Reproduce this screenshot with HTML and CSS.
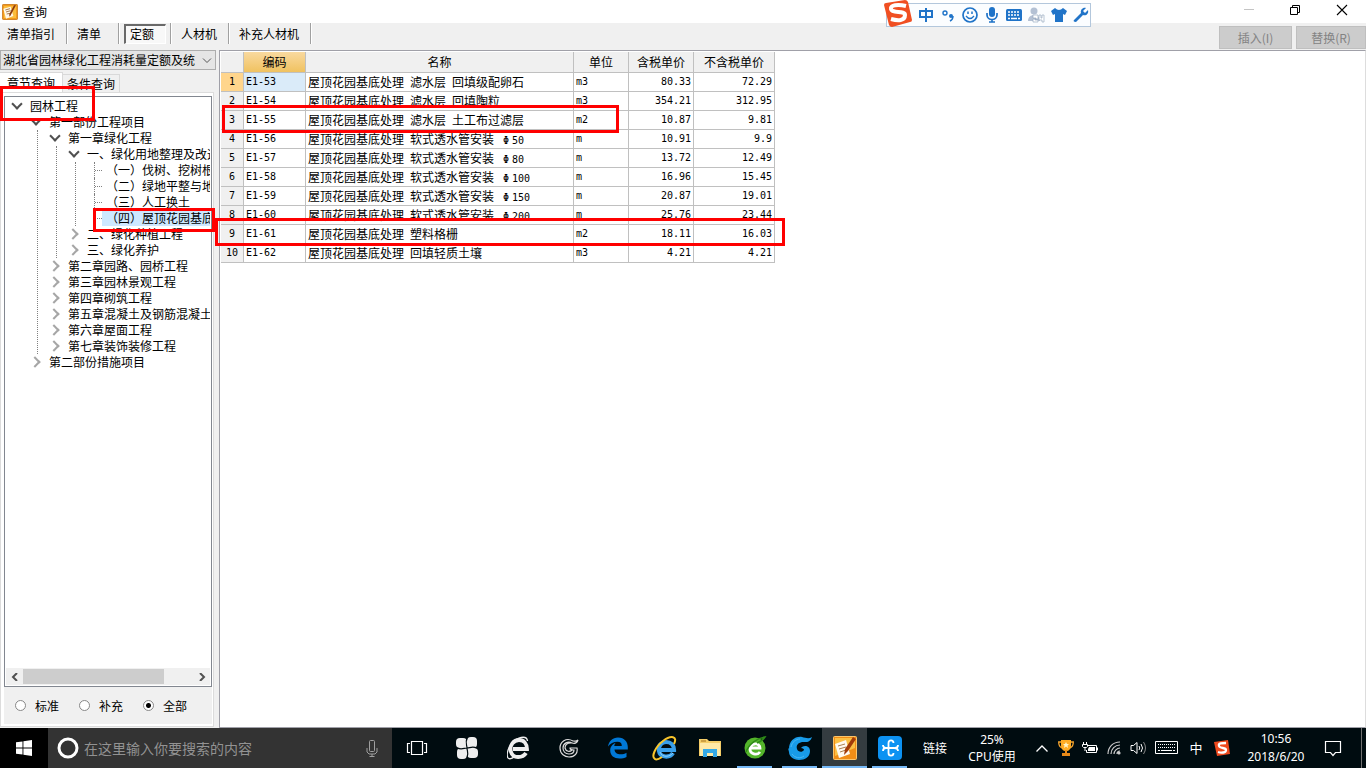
FILE: index.html
```html
<!DOCTYPE html>
<html lang="zh-CN">
<head>
<meta charset="utf-8">
<title>查询</title>
<link rel="stylesheet" href="styles.css">
</head>
<body>
<div class="desktop">
  <header class="titlebar">
    <svg class="app-icon" width="16" height="16" viewBox="0 0 24 24"><rect x=".5" y=".5" width="23" height="23" rx="2" fill="#f39a1c" stroke="#b8640a"/><path d="M3 3h18v18H3z" fill="#fbbd3e"/><path d="M2 7l11-3 4 14-11 4z" fill="#fff8e8"/><path d="M5 9l7-2M6 12l7-2M7 15l5-1" stroke="#9a6a3a" stroke-width="1.3"/><path d="M21 2l-8 15-2 2 0-4 7-13z" fill="#8b3a10"/></svg>
    <h1 class="title">查询</h1>
    <div class="window-controls">
      <button class="win-btn" aria-label="最小化"><svg width="12" height="12"><path d="M1 5.5h10" stroke="#c4c4c4"/></svg></button>
      <button class="win-btn" aria-label="还原"><svg width="12" height="12" fill="none" stroke="#000"><path d="M1.500 3.500h7v7h-7zM3.500 3.500v-2h7v7h-2"/></svg></button>
      <button class="win-btn" aria-label="关闭"><svg width="12" height="12"><path d="M1 1l10 10M11 1L1 11" stroke="#000" stroke-width="1.100"/></svg></button>
    </div>
  </header>

  <nav class="toolbar">
    <button class="tool wide-first">清单指引</button>
    <button class="tool">清单</button>
    <button class="tool pressed"><span>定额</span></button>
    <button class="tool medium">人材机</button>
    <button class="tool wide">补充人材机</button>
    <div class="actions">
      <button class="action" disabled>插入(I)</button>
      <button class="action" disabled>替换(R)</button>
    </div>
  </nav>

  <main class="workspace">
    <aside class="sidebar">
      <div class="combo">
        <select aria-label="定额库"><option>湖北省园林绿化工程消耗量定额及统</option></select>
        <svg width="10" height="6" fill="none" stroke="#555"><path d="M1 .5l4 4 4-4"/></svg>
      </div>
      <div class="tabs">
        <button class="tab active">章节查询</button>
        <button class="tab">条件查询</button>
      </div>
      <div class="pane">
        <div class="tree-box">
          <ul class="tree">
            <li><div class="node open">园林工程</div>
              <ul class="plain">
                <li><div class="node open">第一部份工程项目</div>
                  <ul>
                    <li><div class="node open">第一章绿化工程</div>
                      <ul>
                        <li><div class="node open">一、绿化用地整理及改造</div>
                          <ul class="leaves">
                            <li><div class="leaf"><span>（一）伐树、挖树根</span></div></li>
                            <li><div class="leaf"><span>（二）绿地平整与地</span></div></li>
                            <li><div class="leaf"><span>（三）人工换土</span></div></li>
                            <li><div class="leaf selected"><span>（四）屋顶花园基底</span></div></li>
                          </ul>
                        </li>
                        <li><div class="node">二、绿化种植工程</div></li>
                        <li><div class="node">三、绿化养护</div></li>
                      </ul>
                    </li>
                    <li><div class="node">第二章园路、园桥工程</div></li>
                    <li><div class="node">第三章园林景观工程</div></li>
                    <li><div class="node">第四章砌筑工程</div></li>
                    <li><div class="node">第五章混凝土及钢筋混凝土</div></li>
                    <li><div class="node">第六章屋面工程</div></li>
                    <li><div class="node">第七章装饰装修工程</div></li>
                  </ul>
                </li>
                <li><div class="node">第二部份措施项目</div></li>
              </ul>
            </li>
          </ul>
          <div class="scrollbar">
            <button class="scroll-btn" aria-label="向左"><svg width="8" height="8"><path d="M6 0L2 4l4 4" fill="none" stroke="#505050" stroke-width="2"/></svg></button>
            <div class="track"><div class="thumb"></div></div>
            <button class="scroll-btn" aria-label="向右"><svg width="8" height="8"><path d="M2 0l4 4-4 4" fill="none" stroke="#505050" stroke-width="2"/></svg></button>
          </div>
        </div>
        <div class="filters">
          <label><input type="radio" name="scope">标准</label>
          <label><input type="radio" name="scope">补充</label>
          <label><input type="radio" name="scope" checked>全部</label>
        </div>
      </div>
    </aside>

    <section class="content">
      <table class="grid">
        <colgroup><col class="c-no"><col class="c-code"><col class="c-name"><col class="c-unit"><col class="c-tax"><col class="c-net"></colgroup>
        <thead><tr><th></th><th class="sorted">编码</th><th>名称</th><th>单位</th><th>含税单价</th><th>不含税单价</th></tr></thead>
        <tbody>
          <tr class="current"><th>1</th><td class="mono">E1-53</td><td><span>屋顶花园基底处理</span><span>滤水层</span><span>回填级配卵石</span></td><td class="mono">m3</td><td class="num">80.33</td><td class="num">72.29</td></tr>
          <tr><th>2</th><td class="mono">E1-54</td><td><span>屋顶花园基底处理</span><span>滤水层</span><span>回填陶粒</span></td><td class="mono">m3</td><td class="num">354.21</td><td class="num">312.95</td></tr>
          <tr><th>3</th><td class="mono">E1-55</td><td><span>屋顶花园基底处理</span><span>滤水层</span><span>土工布过滤层</span></td><td class="mono">m2</td><td class="num">10.87</td><td class="num">9.81</td></tr>
          <tr><th>4</th><td class="mono">E1-56</td><td><span>屋顶花园基底处理</span><span>软式透水管安装</span><span class="dia"><b>Φ</b>50</span></td><td class="mono">m</td><td class="num">10.91</td><td class="num">9.9</td></tr>
          <tr><th>5</th><td class="mono">E1-57</td><td><span>屋顶花园基底处理</span><span>软式透水管安装</span><span class="dia"><b>Φ</b>80</span></td><td class="mono">m</td><td class="num">13.72</td><td class="num">12.49</td></tr>
          <tr><th>6</th><td class="mono">E1-58</td><td><span>屋顶花园基底处理</span><span>软式透水管安装</span><span class="dia"><b>Φ</b>100</span></td><td class="mono">m</td><td class="num">16.96</td><td class="num">15.45</td></tr>
          <tr><th>7</th><td class="mono">E1-59</td><td><span>屋顶花园基底处理</span><span>软式透水管安装</span><span class="dia"><b>Φ</b>150</span></td><td class="mono">m</td><td class="num">20.87</td><td class="num">19.01</td></tr>
          <tr><th>8</th><td class="mono">E1-60</td><td><span>屋顶花园基底处理</span><span>软式透水管安装</span><span class="dia"><b>Φ</b>200</span></td><td class="mono">m</td><td class="num">25.76</td><td class="num">23.44</td></tr>
          <tr><th>9</th><td class="mono">E1-61</td><td><span>屋顶花园基底处理</span><span>塑料格栅</span></td><td class="mono">m2</td><td class="num">18.11</td><td class="num">16.03</td></tr>
          <tr><th>10</th><td class="mono">E1-62</td><td><span>屋顶花园基底处理</span><span>回填轻质土壤</span></td><td class="mono">m3</td><td class="num">4.21</td><td class="num">4.21</td></tr>
        </tbody>
      </table>
    </section>
  </main>

  <footer class="taskbar">
    <button class="start" aria-label="开始"><svg width="16" height="16" fill="#fff"><path d="M0 2.300L6.500 1.400v6.100H0zM7.400 1.200L16 0v7.500H7.400zM0 8.400h6.500v6.200L0 13.700zM7.400 8.400H16V16l-8.600-1.200z"/></svg></button>
    <div class="search">
      <svg width="22" height="22"><circle cx="11" cy="11" r="9" fill="none" stroke="#fff" stroke-width="3"/></svg>
      <input type="text" aria-label="搜索" placeholder="在这里输入你要搜索的内容">
      <svg width="12" height="17" fill="none" stroke="#a0a0a0"><rect x="3.500" y=".5" width="5" height="11" rx="1"/><path d="M1 8v4l2 2h6l2-2V8M6 14v2.500M3.500 16.500h5"/></svg>
    </div>
    <button class="task" aria-label="任务视图"><svg width="22" height="16" fill="none" stroke="#fff" stroke-width="1.200"><path d="M5.500 1.500h11v13h-11zM4 3.500H1.500v9H4M18 3.500h2.500v9H18"/></svg></button>
    <button class="task far" aria-label="四叶草"><svg width="22" height="22"><g fill="#eee"><rect x="0" y="1" width="11" height="10" rx="4"/><rect x="11" y="0" width="10" height="11" rx="4"/><rect x="11" y="11" width="11" height="10" rx="4"/><rect x="1" y="11" width="10" height="11" rx="4"/><path d="M7 7h8v8H7z"/></g><path d="M11 11C11 8 9 6 11 1M11 11c3 0 5-2 10 0M11 11c0 3 2 5 0 10M11 11c-3 0-5 2-10 0" fill="none" stroke="#000c10" stroke-width="1.200"/></svg></button>
    <button class="task far" aria-label="浏览器"><svg width="22" height="24" fill="none"><path d="M19 17c-3 5-13 6-15-1C2 9 7 4 12 4c5 0 8 4 8 9H6" stroke="#eee" stroke-width="3.800"/><path d="M20.500 5C20 0 14 0 7 5 1 10-1 19 1 22c1 1.500 5 0 8-2" stroke="#eee" stroke-width="1.300"/></svg></button>
    <button class="task far" aria-label="下载工具"><svg width="20" height="20" fill="none" stroke="#ddd" stroke-width="1.200"><path d="M19 2c-2 2-3 1-5 1C7-1 1 4 1 10c0 6 5 9 9 9 6 0 9-4 8-9h-7c0 1 1 2 4 2 0 3-2 4-5 4-4 0-6-3-6-6 0-5 5-7 9-5 3 1 5 0 6-3zM14 5C7 4 6 8 6 10c1 4 5 4 7 2"/></svg></button>
    <button class="task edge" aria-label="Edge"><svg width="20" height="22" viewBox="0 0 20 22" fill="#0078d7"><path d="M0 9.500C1 4 4.500.5 10 .5c6.500 0 9.800 4.500 9.800 9.500v2.500H6.500c.2 3.500 3 4.800 6 4.800 2.500 0 4.300-.6 6-1.600V20c-2 1-4.500 1.500-7 1.500-5.500 0-9.300-3-9.300-8 0-4 2.300-6.500 5.500-7.800C6.500 7 6.300 8.500 6.300 9h7.500c0-3-1.300-4.300-4.300-4.300C5.500 4.700 2.200 6.500 0 9.500z"/></svg></button>
    <button class="task" aria-label="Internet Explorer"><svg width="26" height="26" fill="none"><path d="M21 18c-3 5-13 5-14-2-1-6 3-9 7-9 5 0 8 3 8 8H8" stroke="#3aa0ea" stroke-width="4.200"/><path d="M21 18c-3 4-11 5-13-1" stroke="#8fd3fa" stroke-width="1"/><path d="M22 9c4-8-3-9-11-3C3 12-1 22 3 24c1 .8 4 0 7-2" stroke="#f8c52b" stroke-width="2"/></svg></button>
    <button class="task" aria-label="文件资源管理器"><svg width="22" height="20"><path d="M0 1h8l2 2h12v15H0z" fill="#f4cd68"/><path d="M1 5h20v13H1z" fill="#ffe9a6"/><path d="M4 19v-8h14v8h-4v-4H8v4z" fill="#35a9e6"/><path d="M2 3h5" stroke="#a6731c"/></svg></button>
    <button class="task running" aria-label="绿色浏览器"><svg width="24" height="24" fill="none"><circle cx="12" cy="12" r="10.500" fill="#54b52b"/><path d="M17 16c-3 4-10 2-10-3 0-6 10-7 10-1H8" stroke="#fff" stroke-width="2.800"/><path d="M3 16C6 8 14 2 22 1c-2 3-5 5-8 6" stroke="#2e8a18" stroke-width="1.500"/></svg></button>
    <button class="task running" aria-label="广联达"><svg width="24" height="24"><path d="M24 1c-2 6-6 5-10 5-4 1-6 3-5 7 1 3 5 4 7 1 0-1-1-2-3-2 2-3 9-3 9 3 0 6-5 9-11 9C5 24 1 20 1 16l-1-4 1 1C1 5 7 0 14 1c4 1 7 2 10 0z" fill="#189be8"/><path d="M3 11C4 6 8 3 12 3M4 18c3 4 8 5 12 2" fill="none" stroke="#4ab8f4" stroke-width="1"/></svg></button>
    <button class="task running current" aria-label="计价软件"><svg width="24" height="24"><rect x=".5" y=".5" width="23" height="23" rx="1" fill="#f08d16" stroke="#fbc56b"/><path d="M2 2h20v10L2 20z" fill="#fbc044"/><path d="M2 8l11-4 4 14-11 4z" fill="#fffaf0"/><path d="M5 10l7-2M6 13l7-2M7 16l6-2" stroke="#ab8052"/><path d="M20 1l3 2-8 12-4 4 1-6z" fill="#a33c09"/></svg></button>
    <button class="task running" aria-label="云助手"><svg width="24" height="24" fill="none"><rect width="24" height="24" rx="4" fill="#0c92f2"/><path d="M15.500 7c0-3.500-5-3.500-5 0v10c0 3.500 5 3.500 5 0M5 9c0 2.500 1.500 3 4 3h7c2.500 0 4 .5 4 3M5 15c0-2 1.500-3 3-3M20 9c0 2-1.500 3-3 3" stroke="#fff" stroke-width="1.800"/></svg></button>
    <div class="tray">
      <span class="links">链接</span>
      <div class="cpu"><span>25%</span><span>CPU使用</span></div>
      <button class="tray-btn" aria-label="显示隐藏的图标"><svg width="12" height="7"><path d="M.5 6.500L6 1l5.500 5.500" fill="none" stroke="#fff" stroke-width="1.300"/></svg></button>
      <button class="tray-btn" aria-label="奖杯"><svg width="16" height="16"><path d="M3 0h10v5c0 4-2 6-5 6S3 9 3 5z" fill="#ffac25"/><path d="M3 2H.7c0 4 1 5 3.300 6M13 2h2.300c0 4-1 5-3.300 6" fill="none" stroke="#f6a52e" stroke-width="1.300"/><path d="M7 10h2v3h3v3H4v-3h3z" fill="#e88918"/><path d="M8 2l1 2h2L9.500 5.500 10 8 8 6.500 6 8l.5-2.500L5 4h2z" fill="#fff4c5"/></svg></button>
      <button class="tray-btn" aria-label="电源"><svg width="16" height="12" fill="none" stroke="#fff"><path d="M6 3.500h8.500v7h-10V8M15.500 5.500v3M1.500 0v3M4.500 0v3M.5 2.500h5v2l-1 1h-3l-1-1zM3 6v3"/><path d="M7 5h6v4H6V7z" fill="#fff" stroke="none"/></svg></button>
      <button class="tray-btn" aria-label="网络"><svg width="14" height="14" fill="none" stroke="#ccc" stroke-width="1.200"><path d="M1 13C1 6 6 1 13 1M4 13c0-5 4-9 9-9M7 13c0-3 3-6 6-6M10 13c0-2 1-3 3-3"/><circle cx="12" cy="12" r="1" fill="#fff"/></svg></button>
      <button class="tray-btn" aria-label="音量"><svg width="17" height="14" fill="none" stroke="#fff"><path d="M1 4.500h2.500L7 1.500v11L3.500 9.500H1z"/><path d="M9 5q1.500 2 0 4M11 3q3 4 0 8"/><path d="M13.500 1q4 6 0 12" stroke="#888"/></svg></button>
      <button class="tray-btn keyboard" aria-label="触摸键盘"><svg width="23" height="14" fill="none" stroke="#fff"><path d="M.5.500h22v12H.5z"/><path d="M3 3.500h17M3 6.500h17" stroke-dasharray="1 1"/><path d="M3 9.500h2M6 9.500h11M18 9.500h2"/></svg></button>
      <button class="tray-btn ime">中</button>
      <button class="tray-btn" aria-label="搜狗输入法"><svg width="16" height="16"><path d="M0 2l14-2 2 14-13 2z" fill="#ee4a1e"/><path d="M12 3c-4 0-8 0-7 3s7 1 7 4-5 3-8 2" fill="none" stroke="#fff" stroke-width="2.300"/></svg></button>
      <div class="clock"><span>10:56</span><span>2018/6/20</span></div>
      <button class="notify" aria-label="通知"><svg width="18" height="17"><path d="M1.500 1.500h15v11h-5L9 15.500 6.500 12.500h-5z" fill="none" stroke="#fff" stroke-width="1.200"/></svg></button>
      <button class="peek" aria-label="显示桌面"></button>
    </div>
  </footer>

  <div class="ime-bar">
    <svg class="ime-logo" width="29" height="28"><path d="M0 5Q0 3 2 3L21 0q2 0 3 2l4 18q0 2-2 2L8 27q-2 0-3-2z" fill="#f04f22"/><path d="M22 6C14 4 6 5 7 9c1 5 14 1 14 6 0 6-7 6-14 4" fill="none" stroke="#fff" stroke-width="4"/></svg>
    <svg width="16" height="16" fill="none" stroke="#1f73c8" stroke-width="2"><path d="M2 4h12v6H2zM8 1v14"/></svg>
    <svg width="16" height="16"><circle cx="5" cy="6" r="2" fill="none" stroke="#1f73c8" stroke-width="1.400"/><circle cx="11" cy="9" r="2" fill="#1f73c8"/><path d="M13 9c0 3-1 4-3 5" fill="none" stroke="#1f73c8" stroke-width="1.500"/></svg>
    <svg width="16" height="16" fill="none" stroke="#1f73c8"><circle cx="8" cy="8" r="7" stroke-width="1.700"/><path d="M6 4.500v2.500M10 4.500v2.500" stroke-width="1.500"/><path d="M4 9q4 5 8 0" stroke-width="1.300"/></svg>
    <svg width="16" height="16"><rect x="5" y="0" width="6" height="10" rx="3" fill="#1f73c8"/><path d="M3 6v2c0 6 10 6 10 0V6M8 12v3M5 15h6" fill="none" stroke="#1f73c8" stroke-width="1.700"/></svg>
    <svg width="16" height="14"><rect y="1" width="16" height="12" rx="1.500" fill="#1f73c8"/><path d="M2 4h12M2 7h12" stroke="#fff" stroke-width="1.500" stroke-dasharray="2 1"/><path d="M2 10.500h2M5 10.500h6M12 10.500h2" stroke="#fff" stroke-width="1.500"/></svg>
    <svg width="17" height="16"><circle cx="6" cy="4" r="3.500" fill="#b4c1d4"/><path d="M0 14c0-8 12-8 12 0z" fill="#b4c1d4"/><path d="M5 8h5v4H7v1h3v2H5v-3h3v-1H5zM11 8h2v3h1V8h2v7h-2v-2h-3z" fill="#fff" stroke="#9cacc2" stroke-width=".7"/></svg>
    <svg width="16" height="16" fill="#1f73c8"><path d="M4 1q4 4 8 0l4 3-2 4-2-1v8H4V7L2 8 0 4z"/></svg>
    <svg width="16" height="16"><path d="M1 13l7-7c-1-3 2-6 5-5l-3 3 2 2 3-3c1 4-2 6-5 5l-7 7c-2 0-3-1-2-2z" fill="#1f73c8"/></svg>
  </div>
  <div class="mark mark-root"></div>
  <div class="mark mark-section"></div>
  <div class="mark mark-row3"></div>
  <div class="mark mark-row9"></div>
</div>
</body>
</html>
```

FILE: styles.css
```css
* { box-sizing: border-box; }
body { margin: 0; font: 12px/16px "Noto Sans CJK SC", sans-serif; color: #000; }
button, input, select { font: inherit; color: inherit; }
button { border: 0; padding: 0; background: none; }
svg { display: block; flex: none; }
ul { list-style: none; margin: 0; padding: 0; }

.desktop { position: relative; display: flex; flex-direction: column; height: 100vh; overflow: hidden; background: #f0f0f0; }

/* Title bar */
.titlebar { display: flex; align-items: center; height: 23px; padding-left: 2px; background: #fff; flex: none; }
.title { margin: 0 0 0 5px; font-size: 12px; font-weight: 400; }
.window-controls { display: flex; margin-left: auto; align-self: stretch; padding-bottom: 3px; }
.win-btn { width: 46px; display: flex; align-items: center; justify-content: center; }
.win-btn:last-child { width: 48px; }

/* Toolbar */
.toolbar { display: flex; height: 27px; flex: none; }
.tool { width: 52px; height: 21px; padding-left: 10px; text-align: left; border-right: 1px solid #a0a0a0; box-shadow: 1px 0 #fff; }
.wide-first { width: 67px; padding-left: 7px; }
.medium { width: 58px; }
.wide { width: 82px; }
.pressed { padding: 1px 4px 0 5px; }
.pressed span { display: block; height: 20px; padding: 0 4px; line-height: 16px; border: 1px solid #fff; border-top: 2px solid #696969; border-left: 2px solid #696969; background: #f8f8f8; }
.actions { display: flex; gap: 4px; margin-left: auto; padding-top: 3px; }
.action { width: 73px; height: 23px; border: 1px solid #bfbfbf; background: #ccc; color: #838383; }
.action:last-child { width: 70px; }

/* Left side */
.workspace { display: flex; flex: 1; min-height: 0; }
.sidebar { display: flex; flex-direction: column; width: 219px; flex: none; padding-right: 5px; }
.combo { position: relative; width: 216px; height: 20px; }
.combo select { appearance: none; width: 100%; height: 20px; padding: 0 18px 0 2px; border: 1px solid #adadad; border-radius: 0; background: #e5e5e5; }
.combo svg { position: absolute; right: 4px; top: 8px; }
.tabs { display: flex; align-items: flex-end; height: 22px; flex: none; }
.tab { height: 18px; padding: 0 4px; border: 1px solid #d9d9d9; border-bottom: 0; border-left: 0; background: #f0f0f0; }
.tab.active { height: 20px; padding: 0 7px; background: #fff; }
.pane { display: flex; flex-direction: column; flex: 1; min-height: 0; margin-bottom: 1px; padding: 3px 1px 2px 3px; border: 1px solid #dcdcdc; background: #fff; }
.tree-box { display: flex; flex-direction: column; flex: 1; min-height: 0; border: 1px solid #828790; padding: 1px; overflow: hidden; }
.tree { flex: 1; padding-left: 1px; overflow: hidden; white-space: nowrap; }
.tree ul { margin-left: 11px; padding-left: 7px; border-left: 1px dotted #808080; }
.tree ul.plain { border-color: transparent; }
.tree ul.leaves { padding-left: 18px; }
.node { display: flex; align-items: center; height: 16px; }
.node::before { content: ""; width: 6px; height: 6px; margin: 0 10px 0 5px; border: solid #a6a6a6; border-width: 2px 2px 0 0; transform: rotate(45deg); flex: none; }
.node.open::before { border-color: #505050; margin: 0 9px 4px 6px; transform: rotate(135deg); }
.leaf { height: 16px; display: flex; align-items: center; border-left: 1px dotted #808080; }
.leaf::before { content: ""; width: 7px; border-top: 1px dotted #808080; flex: none; }
.leaf span { flex: 1; padding-left: 4px; }
.selected span { background: #cde8ff; }
.scrollbar { display: flex; height: 17px; flex: none; background: #f0f0f0; }
.scroll-btn { width: 17px; display: flex; align-items: center; justify-content: center; }
.track { flex: 1; }
.thumb { width: 83%; height: 15px; margin-top: 1px; background: #cdcdcd; }
.filters { display: flex; gap: 20px; height: 37px; flex: none; padding-left: 11px; align-items: center; background: #f0f0f0; }
.filters label { display: flex; align-items: center; gap: 9px; }
.filters input { appearance: none; width: 11px; height: 11px; margin: 0; border: 1px solid #888; border-radius: 50%; background: #fff; }
.filters input:checked { background: radial-gradient(circle, #000 0 2px, #fff 3px); }

/* Price table */
.content { flex: 1; min-width: 0; padding-top: 1px; border: 1px solid #a0a0a8; border-right-color: #ddd; background: #fff; }
.grid { border-collapse: separate; border-spacing: 0; table-layout: fixed; width: 554px; margin-left: 1px; }
.c-no { width: 23px; } .c-code { width: 62px; } .c-name { width: 268px; }
.c-unit { width: 55px; } .c-tax { width: 65px; } .c-net { width: 81px; }
.grid th, .grid td { height: 19px; padding: 0 2px; line-height: 16px; border: solid #c0c0c0; border-width: 0 1px 1px 0; font-weight: 400; white-space: nowrap; }
.grid th { background: #f0f0f0; }
.grid thead th { height: 21px; }
.grid .sorted { background: linear-gradient(#f9d99f, #f0c260); }
.grid tbody th, .mono, .num, .dia { font-family: "DejaVu Sans Mono", monospace; font-size: 10px; }
.grid tbody th { padding: 0; }
.num { text-align: right; }
.current th { background: #ffd58c; }
.current th + td { background: #daebf9; }
.grid td span + span { margin-left: 6px; }
.dia { line-height: 10px; }
.dia b { display: inline-block; width: 12px; text-align: center; font-weight: 400; }

/* Taskbar */
.taskbar { display: flex; height: 40px; flex: none; background: #000c10; color: #fff; }
.start { width: 48px; display: flex; align-items: center; justify-content: center; background: #000; }
.search { display: flex; align-items: center; width: 344px; padding: 0 14px 0 9px; background: #333; }
.search input { flex: 1; min-width: 0; height: 30px; padding: 0 5px; border: 0; background: none; font-size: 14px; }
.search input::placeholder { color: #929292; }
.task { width: 45px; display: flex; align-items: center; justify-content: center; position: relative; flex: none; }
.task[aria-label="任务视图"] { width: 49px; }
.far { width: 51px; }
.edge { width: 48px; }
.running::after { content: ""; position: absolute; left: 5px; right: 5px; bottom: 0; height: 2px; background: #76b9f7; }
.task.current { background: #343c40; }
.task.current::after { left: 0; right: 0; }
.tray { display: flex; align-items: center; margin-left: auto; }
.links { width: 46px; text-align: center; }
.cpu, .clock { display: flex; flex-direction: column; width: 68px; text-align: center; line-height: 17px; font-family: "Noto Sans", "Noto Sans CJK SC", sans-serif; }
.cpu { margin-right: 4px; }
.clock { width: 84px; line-height: 18px; }
.tray-btn { width: 24px; height: 40px; display: flex; align-items: center; justify-content: center; }
.keyboard { width: 32px; }
.ime { width: 28px; font-size: 13px; }
.notify { width: 30px; display: flex; justify-content: center; }
.peek { width: 5px; height: 40px; margin-left: 13px; border-left: 1px solid #707070; }

/* Floating input-method bar */
.ime-bar { position: absolute; left: 886px; top: 3px; display: flex; align-items: center; gap: 6px; width: 205px; height: 24px; padding-left: 31px; border: 1px solid #b3c7dc; background: #fbfdff; }
.ime-logo { position: absolute; left: -3px; top: -4px; }

/* Highlight frames drawn over the window */
.mark { position: absolute; border: 3px solid #f00; pointer-events: none; }
.mark-root { left: 0; top: 86px; width: 95px; height: 35px; }
.mark-section { left: 93px; top: 208px; width: 122px; height: 24px; }
.mark-row3 { left: 222px; top: 105px; width: 397px; height: 28px; }
.mark-row9 { left: 215px; top: 218px; width: 570px; height: 28px; }
```
